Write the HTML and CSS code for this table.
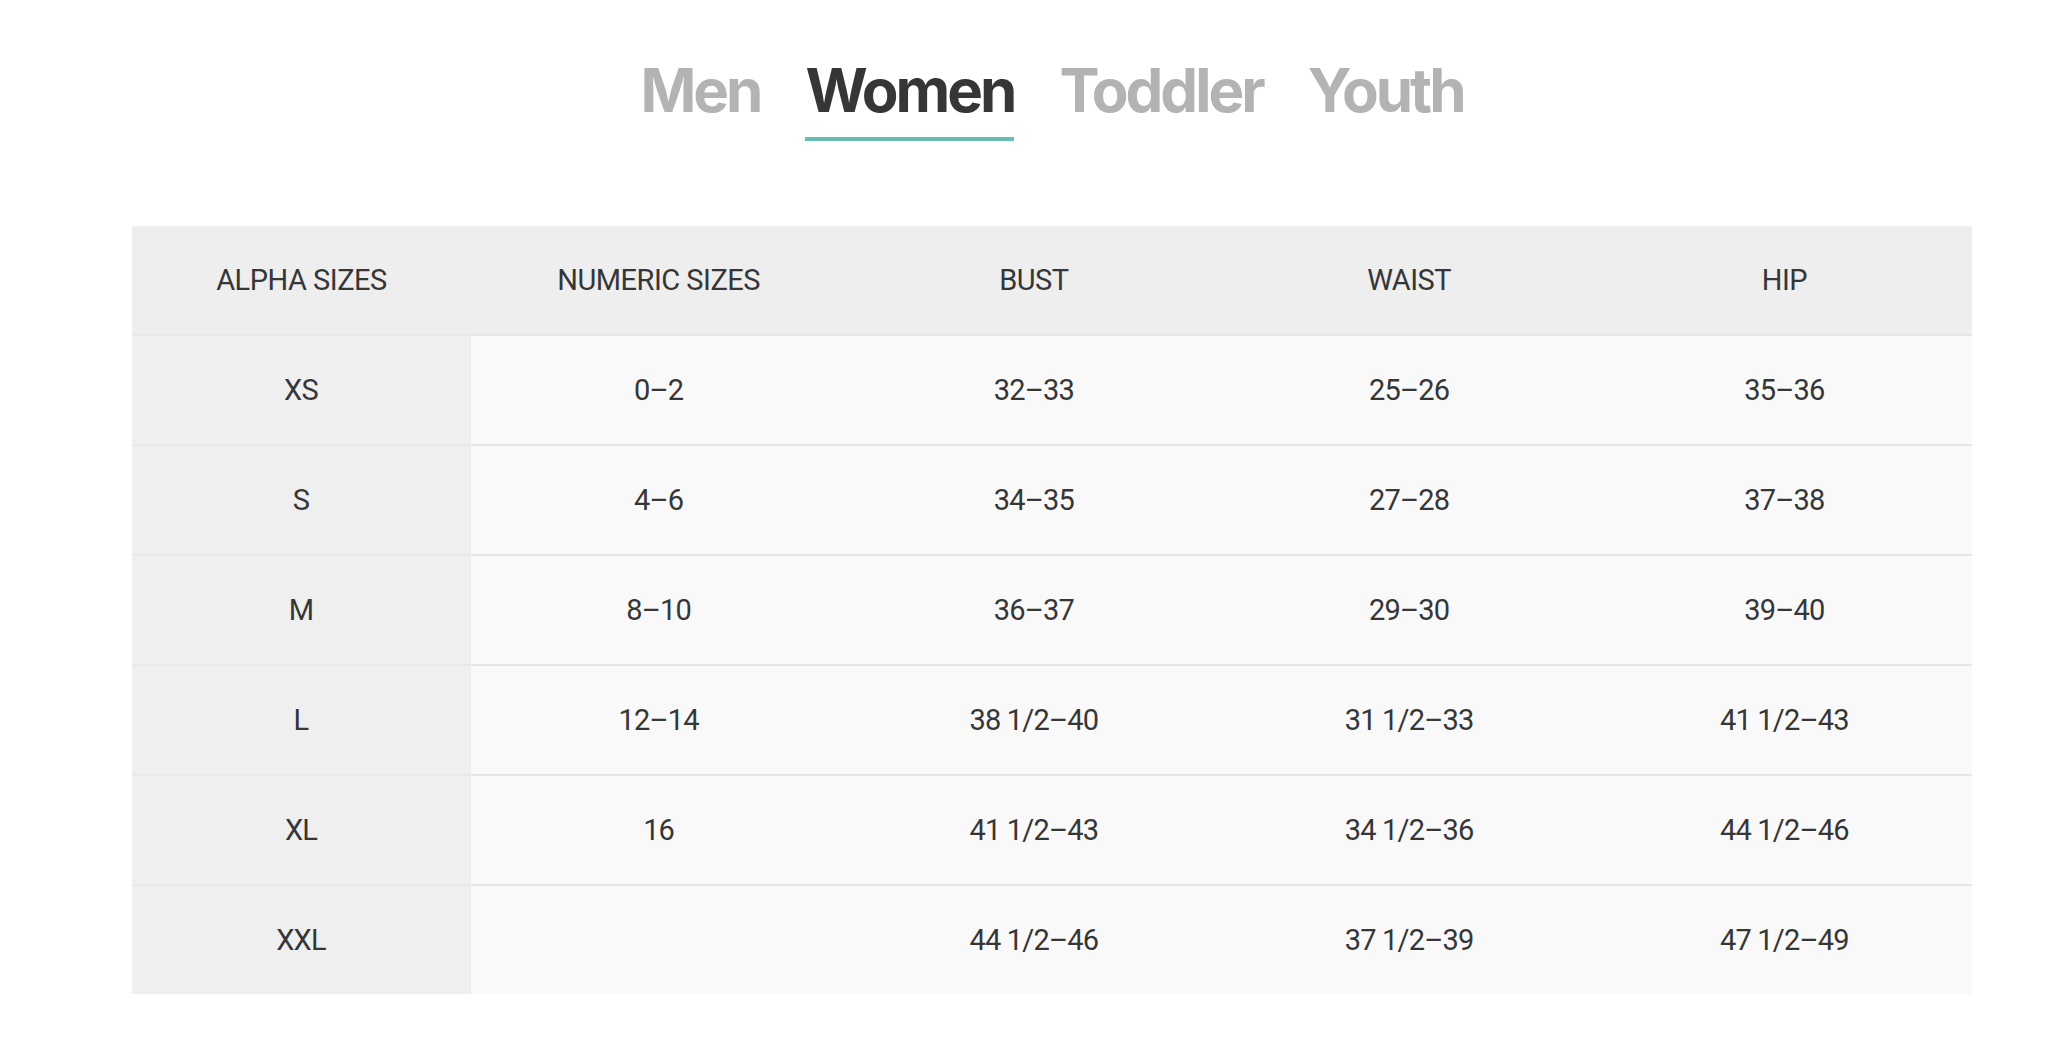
FILE: index.html
```html
<!DOCTYPE html>
<html lang="en">
<head>
<meta charset="utf-8">
<title>Size Chart</title>
<link rel="stylesheet" href="styles.css">
</head>
<body>
<div class="page">
  <nav class="tabs">
    <span class="tab">Men</span>
    <span class="tab active">Women</span>
    <span class="tab">Toddler</span>
    <span class="tab">Youth</span>
  </nav>
  <div class="chart">
    <div class="cell head">ALPHA SIZES</div>
    <div class="cell head">NUMERIC SIZES</div>
    <div class="cell head">BUST</div>
    <div class="cell head">WAIST</div>
    <div class="cell head">HIP</div>

    <div class="cell alpha">XS</div>
    <div class="cell">0–2</div>
    <div class="cell">32–33</div>
    <div class="cell">25–26</div>
    <div class="cell">35–36</div>

    <div class="cell alpha">S</div>
    <div class="cell">4–6</div>
    <div class="cell">34–35</div>
    <div class="cell">27–28</div>
    <div class="cell">37–38</div>

    <div class="cell alpha">M</div>
    <div class="cell">8–10</div>
    <div class="cell">36–37</div>
    <div class="cell">29–30</div>
    <div class="cell">39–40</div>

    <div class="cell alpha">L</div>
    <div class="cell">12–14</div>
    <div class="cell">38 1/2–40</div>
    <div class="cell">31 1/2–33</div>
    <div class="cell">41 1/2–43</div>

    <div class="cell alpha">XL</div>
    <div class="cell">16</div>
    <div class="cell">41 1/2–43</div>
    <div class="cell">34 1/2–36</div>
    <div class="cell">44 1/2–46</div>

    <div class="cell alpha">XXL</div>
    <div class="cell"></div>
    <div class="cell">44 1/2–46</div>
    <div class="cell">37 1/2–39</div>
    <div class="cell">47 1/2–49</div>
  </div>
</div>
</body>
</html>
```
FILE: styles.css
```css
* { box-sizing: border-box; }
html, body { margin: 0; padding: 0; background: #ffffff; }
body { font-family: Roboto, "Liberation Sans", sans-serif; color: #363636; }

.page {
  padding: 0 80px 0 132px;
}

.tabs {
  display: flex;
  justify-content: center;
  gap: 45px;
  margin-top: 60px;
}

.tab {
  font-family: Inter, "Liberation Sans", sans-serif;
  font-weight: 700;
  font-size: 60px;
  line-height: 60px;
  letter-spacing: -3px;
  color: #b3b3b3;
  padding-bottom: 17px;
  border-bottom: 4px solid transparent;
}

.tab.active {
  color: #363636;
  border-bottom-color: #66bdb3;
}

.chart {
  margin-top: 85px;
  display: grid;
  grid-template-columns: 339px repeat(4, 1fr);
  background: #f9f9f9;
}

.cell {
  height: 110px;
  display: flex;
  align-items: center;
  justify-content: center;
  font-size: 29px;
  letter-spacing: -0.8px;
  border-top: 2px solid #e5e5e5;
  color: #363636;
}

.cell.head {
  height: 108px;
  border-top: none;
  background: #eeeeee;
  letter-spacing: -0.5px;
}

.cell.alpha {
  background: #efefef;
  border-top-color: #e8e8e8;
  border-right: 1px solid #ebebeb;
}
```
